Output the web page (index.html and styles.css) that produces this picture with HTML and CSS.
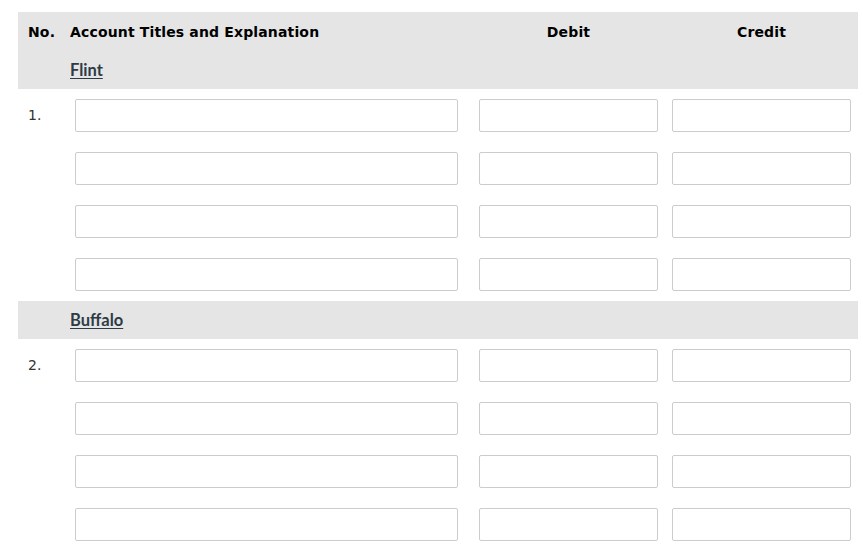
FILE: index.html
```html
<!DOCTYPE html>
<html>
<head>
<meta charset="utf-8">
<link rel="stylesheet" href="styles.css">
</head>
<body>
<div class="sheet">
  <div class="band head">
    <div class="cell no-h">No.</div>
    <div class="cell acct-h">Account Titles and Explanation</div>
    <div class="cell amt-h">Debit</div>
    <div class="cell amt-h last">Credit</div>
  </div>
  <div class="band sub">
    <div class="cell"></div>
    <div class="cell acct-h"><a class="co" href="#">Flint</a></div>
    <div class="cell"></div>
    <div class="cell last"></div>
  </div>

  <div class="row">
    <div class="cell no">1.</div>
    <div class="cell acct"><input class="box" type="text"></div>
    <div class="cell amt"><input class="box" type="text"></div>
    <div class="cell amt last"><input class="box" type="text"></div>
  </div>
  <div class="row">
    <div class="cell no"></div>
    <div class="cell acct"><input class="box" type="text"></div>
    <div class="cell amt"><input class="box" type="text"></div>
    <div class="cell amt last"><input class="box" type="text"></div>
  </div>
  <div class="row">
    <div class="cell no"></div>
    <div class="cell acct"><input class="box" type="text"></div>
    <div class="cell amt"><input class="box" type="text"></div>
    <div class="cell amt last"><input class="box" type="text"></div>
  </div>
  <div class="row">
    <div class="cell no"></div>
    <div class="cell acct"><input class="box" type="text"></div>
    <div class="cell amt"><input class="box" type="text"></div>
    <div class="cell amt last"><input class="box" type="text"></div>
  </div>

  <div class="band sub2">
    <div class="cell"></div>
    <div class="cell acct-h"><a class="co" href="#">Buffalo</a></div>
    <div class="cell"></div>
    <div class="cell last"></div>
  </div>

  <div class="row">
    <div class="cell no">2.</div>
    <div class="cell acct"><input class="box" type="text"></div>
    <div class="cell amt"><input class="box" type="text"></div>
    <div class="cell amt last"><input class="box" type="text"></div>
  </div>
  <div class="row">
    <div class="cell no"></div>
    <div class="cell acct"><input class="box" type="text"></div>
    <div class="cell amt"><input class="box" type="text"></div>
    <div class="cell amt last"><input class="box" type="text"></div>
  </div>
  <div class="row">
    <div class="cell no"></div>
    <div class="cell acct"><input class="box" type="text"></div>
    <div class="cell amt"><input class="box" type="text"></div>
    <div class="cell amt last"><input class="box" type="text"></div>
  </div>
  <div class="row">
    <div class="cell no"></div>
    <div class="cell acct"><input class="box" type="text"></div>
    <div class="cell amt"><input class="box" type="text"></div>
    <div class="cell amt last"><input class="box" type="text"></div>
  </div>
</div>
</body>
</html>
```

FILE: styles.css
```css
html, body {
  margin: 0;
  padding: 0;
  background: #ffffff;
}
body {
  font-family: "DejaVu Sans", Verdana, sans-serif;
  color: #000000;
}
.sheet {
  margin: 12px 0 0 18px;
  width: 840px;
}
.band, .row {
  display: grid;
  grid-template-columns: 52px 398px 193px 197px;
}
.band {
  background: #e5e5e5;
}
.head {
  height: 39px;
  align-items: center;
  font-weight: bold;
  font-size: 14px;
  letter-spacing: 0.15px;
}
.sub {
  height: 38px;
  align-items: center;
}
.sub2 {
  height: 38px;
  align-items: center;
}
.cell {
  box-sizing: border-box;
}
.no-h {
  padding-left: 10px;
}
.acct-h {
  padding-left: 0;
}
.amt-h {
  text-align: center;
  padding-left: 11px;
  padding-right: 3px;
}
.amt-h.last {
  padding-right: 7px;
}
.co {
  font-family: Lato, "DejaVu Sans", sans-serif;
  font-weight: bold;
  font-size: 16.5px;
  color: #2d3b45;
  text-decoration: underline;
  text-underline-offset: 2px;
}
.row {
  height: 53px;
  align-items: start;
}
.row .cell {
  padding-top: 10px;
}
.no {
  padding-left: 10px;
  font-size: 14px;
  color: #333333;
  line-height: 33px;
}
.acct {
  padding-left: 5px;
  padding-right: 10px;
}
.amt {
  padding-left: 11px;
  padding-right: 3px;
}
.amt.last {
  padding-right: 7px;
}
.box {
  display: block;
  box-sizing: border-box;
  width: 100%;
  height: 33px;
  margin: 0;
  padding: 0 6px;
  border: 1px solid #cccccc;
  border-radius: 2px;
  background: #ffffff;
  font-family: "DejaVu Sans", sans-serif;
  font-size: 13px;
  outline: none;
}
```
